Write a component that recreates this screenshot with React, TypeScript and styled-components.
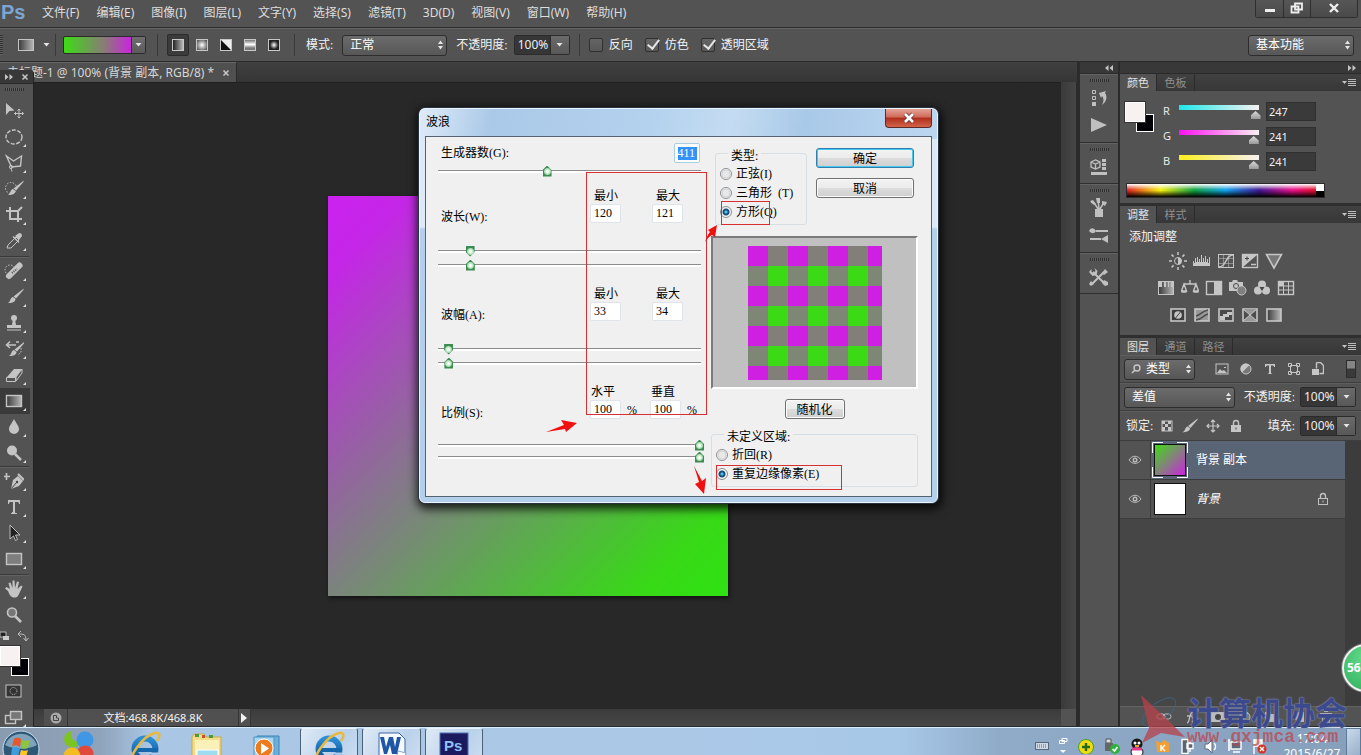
import React from "react";
import styled, { createGlobalStyle, css } from "styled-components";

const ui = `"Noto Sans", "Noto Sans CJK SC", sans-serif`;
const song = `"Liberation Serif", "Noto Sans CJK SC", serif`;

const Global = createGlobalStyle`
  * { box-sizing: border-box; }
  body { margin: 0; overflow: hidden; background: #282828; }
  button, input, select { font: inherit; color: inherit; margin: 0; }
  svg { display: block; flex: none; }
`;

/* ---------- shell ---------- */
const Screen = styled.div`
  position: relative;
  height: 100vh;
  display: flex;
  flex-direction: column;
  overflow: hidden;
  font: 12px/16px ${ui};
  color: #e8e8e8;
`;
const MenuBar = styled.header`
  display: flex;
  align-items: flex-start;
  height: 28px;
  flex: none;
  background: #535353;
  border-bottom: 1px solid #2c2c2c;
`;
const Brand = styled.span`
  width: 42px;
  padding-left: 1px;
  font: bold 20px/25px "Liberation Sans", sans-serif;
  color: #7ca6d2;
`;
const Menus = styled.nav`
  display: flex;
  gap: 17px;
  flex: 1;
  padding-top: 5px;
  color: #dedede;
`;
const MenuLink = styled.a`
  color: inherit;
  text-decoration: none;
  white-space: nowrap;
`;
const WindowButtons = styled.div`
  display: flex;
  margin-right: 3px;
  border: 1px solid #2e2e2e;
  border-top: 0;
  border-radius: 0 0 3px 3px;
`;
const WindowButton = styled.button<{ $w: number }>`
  width: ${(p) => p.$w}px;
  height: 17px;
  padding: 0 0 2px;
  display: grid;
  place-items: center;
  border: 0;
  border-right: 1px solid #2e2e2e;
  background: linear-gradient(#565656, #4a4a4a);
  &:last-child { border-right: 0; }
`;

/* ---------- option bar ---------- */
const OptionBar = styled.div`
  display: flex;
  align-items: center;
  flex: none;
  height: 34px;
  background: #535353;
  border-top: 1px solid #656565;
  border-bottom: 1px solid #2b2b2b;
  white-space: nowrap;
`;
const Grip = styled.span`
  width: 3px;
  height: 20px;
  margin-right: 14px;
  background: repeating-linear-gradient(#333 0 1px, #5e5e5e 1px 2px);
`;
const Divider = styled.span`
  width: 1px;
  height: 22px;
  background: #3a3a3a;
`;
const bareButton = css`
  padding: 0;
  border: 0;
  background: none;
  display: grid;
  place-items: center;
`;
const PresetButton = styled.button`
  ${bareButton}
  display: flex;
  align-items: center;
  gap: 8px;
  margin-right: 5px;
`;
const GradientPicker = styled.button`
  display: flex;
  width: 83px;
  height: 18px;
  margin: 0 11px 0 7px;
  padding: 0;
  border: 1px solid #2b2b2b;
  border-radius: 2px;
  background: linear-gradient(90deg, #3ddc14, #8a7a78 50%, #cc22e0 84%);
`;
const DropEnd = styled.span`
  width: 14px;
  height: 100%;
  margin-left: auto;
  display: grid;
  place-items: center;
  border-left: 1px solid #2b2b2b;
  background: linear-gradient(#6e6e6e, #5a5a5a);
`;
const GradientTypes = styled.div`
  display: flex;
  gap: 2px;
  margin: 0 9px 0 9px;
`;
const TypeButton = styled.button<{ $on?: boolean }>`
  ${bareButton}
  width: 22px;
  height: 22px;
  border: 1px solid ${(p) => (p.$on ? "#2c2c2c" : "transparent")};
  border-radius: 2px;
  background: ${(p) => (p.$on ? "#3b3b3b" : "none")};
`;
const TypeSwatch = styled.span<{ $fill: string }>`
  width: 12px;
  height: 12px;
  border: 1px solid #c8c8c8;
  background: ${(p) => p.$fill};
`;
const FieldLabel = styled.label`
  font-family: ${song};
  color: #f2f2f2;
`;
const SelectShell = styled.span<{ $w: number }>`
  display: grid;
  width: ${(p) => p.$w}px;
  height: 21px;
  align-items: center;
  > * { grid-area: 1 / 1; }
  > svg { justify-self: end; margin-right: 3px; pointer-events: none; }
  > svg + svg { justify-self: start; margin-left: 7px; }
`;
const SelectBox = styled.select<{ $pad: number }>`
  appearance: none;
  width: 100%;
  height: 21px;
  padding: 0 0 0 ${(p) => p.$pad}px;
  border: 1px solid #2d2d2d;
  border-radius: 3px;
  background: linear-gradient(#6b6b6b, #575757);
  font: 12px/16px ${song};
  color: #fff;
`;
const Combo = styled.span`
  display: flex;
  width: 56px;
  height: 20px;
  border: 1px solid #2b2b2b;
  border-radius: 2px;
`;
const ComboInput = styled.input`
  width: 35px;
  padding: 0 0 0 3px;
  border: 0;
  background: #363636;
  color: #f0f0f0;
`;
const ComboButton = styled.button`
  ${bareButton}
  flex: 1;
  border-left: 1px solid #2b2b2b;
  background: linear-gradient(#6a6a6a, #585858);
`;
const Tick = styled.label`
  display: flex;
  align-items: center;
  gap: 6px;
  font-family: ${song};
  color: #f2f2f2;
`;
const TickBox = styled.input`
  appearance: none;
  position: relative;
  width: 14px;
  height: 14px;
  border: 1px solid #303030;
  border-radius: 2px;
  background: linear-gradient(#646464, #585858);
  &:checked::after {
    content: "";
    position: absolute;
    left: 4px;
    top: -2px;
    width: 5px;
    height: 10px;
    border: solid #e6e6e6;
    border-width: 0 2px 2px 0;
    transform: rotate(38deg);
  }
`;
const OptionSet = styled.div<{ $gap: number; $left: number; $right: number }>`
  display: flex;
  align-items: center;
  gap: ${(p) => p.$gap}px;
  padding: 0 ${(p) => p.$right}px 0 ${(p) => p.$left}px;
`;
const Spring = styled.span`
  flex: 1;
`;

/* ---------- work area ---------- */
const Work = styled.main`
  display: flex;
  flex: 1;
  min-height: 0;
  border-bottom: 1px solid #2b2b2b;
`;
const DocColumn = styled.section`
  display: flex;
  flex-direction: column;
  flex: 1;
  min-width: 0;
`;
const TabStrip = styled.div`
  display: flex;
  height: 20px;
  flex: none;
  background: linear-gradient(#404040, #353535);
`;
const DocTab = styled.div`
  display: flex;
  align-items: center;
  gap: 8px;
  padding: 0 6px 0 7px;
  background: #505050;
  border-top: 1px solid #666;
  border-right: 1px solid #2b2b2b;
  color: #d6d6d6;
  white-space: nowrap;
`;
const TabClose = styled.button`
  ${bareButton}
  width: 8px;
`;
const Stage = styled.div`
  display: flex;
  flex: 1;
  min-height: 0;
`;
const Pasteboard = styled.div`
  flex: 1;
  display: grid;
  place-items: center;
  padding-right: 5px;
  background: #282828;
  border-top: 1px solid #202020;
`;
const Artwork = styled.div`
  width: 400px;
  height: 400px;
  background: linear-gradient(135deg, #cc22f0 0%, #c426e6 10%, #7f7f82 48%, #38d818 88%, #2fe212 100%);
  box-shadow: 1px 2px 4px #111;
`;
const ScrollV = styled.div`
  width: 16px;
  background: linear-gradient(90deg, #3a3a3a, #464646);
  border-right: 1px solid #2b2b2b;
`;
const StatusBar = styled.footer`
  display: flex;
  flex: none;
  height: 17px;
  padding-left: 44px;
  background: linear-gradient(#3b3b3b, #474747);
`;
const StatusCell = styled.div<{ $w: number }>`
  width: ${(p) => p.$w}px;
  display: grid;
  place-items: center;
  background: #505050;
  border-right: 1px solid #363636;
  font-size: 11px;
  line-height: 16px;
  color: #f4f4f4;
`;
const ScrollCorner = styled.span`
  width: 16px;
  margin-left: auto;
  background: #535353;
  border-right: 1px solid #2b2b2b;
`;

/* ---------- tool palette ---------- */
const Palette = styled.aside`
  position: absolute;
  left: 0;
  top: 70px;
  bottom: 28px;
  width: 34px;
  overflow: hidden;
  background: #535353;
  border-right: 1px solid #232323;
  border-radius: 0 4px 0 0;
`;
const PaletteHead = styled.div`
  display: flex;
  align-items: center;
  gap: 8px;
  height: 14px;
  padding-left: 5px;
  background: #383838;
  border-bottom: 1px solid #2a2a2a;
`;
const Dots = styled.div`
  width: 19px;
  height: 3px;
  background: repeating-linear-gradient(90deg, #2e2e2e 0 1px, #5e5e5e 1px 2px);
`;
const PaletteGrip = styled.div`
  height: 14px;
  padding: 4px 0 0 5px;
`;
const ToolButton = styled.button<{ $on?: boolean; $more?: boolean }>`
  ${bareButton}
  position: relative;
  width: 30px;
  height: 26px;
  justify-items: start;
  padding-left: 4px;
  color: #c4c4c4;
  background: ${(p) => (p.$on ? "#3a3a3a" : "none")};
  ${(p) =>
    p.$more &&
    css`
      &::after {
        content: "";
        position: absolute;
        right: 4px;
        bottom: 3px;
        border: solid transparent;
        border-width: 3px 0 0 3px;
        border-color: transparent;
        border-bottom: 3px solid #e0e0e0;
      }
    `}
`;
const ToolRule = styled.div<{ $h: number }>`
  width: 29px;
  height: ${(p) => p.$h}px;
  border-bottom: 1px solid #626262;
  box-shadow: inset 0 -1px #3a3a3a;
`;
const SwapRow = styled.div`
  display: flex;
  align-items: center;
  gap: 7px;
  height: 16px;
`;
const ToolSwatches = styled.div`
  height: 34px;
  padding-top: 2px;
`;

/* ---------- icon dock ---------- */
const Dock = styled.aside`
  width: 42px;
  flex: none;
  display: flex;
  flex-direction: column;
  border: solid #2b2b2b;
  border-width: 0 1px 0 3px;
  background: #535353;
`;
const DockHead = styled.div<{ $pad: number }>`
  display: flex;
  align-items: center;
  justify-content: flex-end;
  height: 12px;
  flex: none;
  padding-right: ${(p) => p.$pad}px;
  background: #383838;
  border-bottom: 1px solid #2b2b2b;
`;
const DockGroup = styled.div<{ $h: number }>`
  height: ${(p) => p.$h}px;
  display: flex;
  flex-direction: column;
  align-items: center;
  gap: 5px;
  padding-top: 4px;
  border-top: 1px solid #636363;
  border-bottom: 1px solid #2e2e2e;
  color: #c0c0c0;
`;
const DockButton = styled.button`
  ${bareButton}
  width: 24px;
  height: 22px;
`;

/* ---------- panels ---------- */
const Panels = styled.aside`
  width: 242px;
  flex: none;
  display: flex;
  flex-direction: column;
  background: #2f2f2f;
  border-left: 1px solid #2b2b2b;
`;
const Panel = styled.section<{ $h?: number }>`
  display: flex;
  flex-direction: column;
  ${(p) => (p.$h ? `height: ${p.$h}px; flex: none;` : "flex: 1; min-height: 0;")}
  margin-bottom: ${(p) => (p.$h ? 3 : 0)}px;
  background: #535353;
`;
const PanelTabs = styled.div`
  display: flex;
  align-items: center;
  height: 17px;
  flex: none;
  padding-right: 5px;
  background: linear-gradient(#414141, #373737);
`;
const PanelTab = styled.button<{ $on?: boolean }>`
  height: 17px;
  width: ${(p) => (p.$on ? 37 : 38)}px;
  padding: 0 0 1px;
  border: 0;
  border-right: 1px solid #2b2b2b;
  background: ${(p) => (p.$on ? "#535353" : "none")};
  color: ${(p) => (p.$on ? "#e2e2e2" : "#8f8f8f")};
  font-size: 11px;
  line-height: 15px;
`;
const PanelMenu = styled.button`
  ${bareButton}
  margin-left: auto;
`;
const ColorBody = styled.div`
  display: grid;
  grid-template-columns: 38px 1fr;
  padding: 11px 44px 0 5px;
`;
const SwatchPair = styled.div`
  position: relative;
  width: 29px;
  height: 30px;
`;
const BackSwatch = styled.span`
  position: absolute;
  left: 11px;
  top: 12px;
  width: 18px;
  height: 18px;
  background: #020206;
  border: 1px solid #fff;
`;
const FrontSwatch = styled.span`
  position: absolute;
  left: 0;
  top: 0;
  width: 20px;
  height: 20px;
  background: #f7f1f1;
  border: 1px solid #fff;
  box-shadow: 0 0 0 1px #333;
`;
const Channels = styled.div`
  display: flex;
  flex-direction: column;
  gap: 6px;
`;
const Channel = styled.label`
  display: flex;
  align-items: flex-start;
  height: 19px;
  line-height: 17px;
  font-size: 11px;
  > span { width: 12px; }
`;
const ChannelSlider = styled.input<{ $from: string }>`
  appearance: none;
  width: 88px;
  height: 18px;
  background: linear-gradient(90deg, ${(p) => p.$from}, #f7f1f1) 4px 3px / 80px 5px no-repeat;
  &::-webkit-slider-thumb {
    appearance: none;
    width: 10px;
    height: 8px;
    margin-top: 8px;
    background: linear-gradient(#dcdcdc, #999);
    clip-path: polygon(50% 0, 100% 55%, 100% 100%, 0 100%, 0 55%);
  }
`;
const ChannelInput = styled.input`
  width: 50px;
  height: 19px;
  margin-left: 3px;
  padding: 0 0 0 2px;
  background: #3a3a3a;
  border: 1px solid #303030;
  color: #f0f0f0;
  font-size: 11px;
`;
const Spectrum = styled.div`
  display: flex;
  justify-content: flex-end;
  width: 199px;
  height: 15px;
  margin: 12px 0 0 6px;
  border: 1px solid #2b2b2b;
  background:
    linear-gradient(#fff, #fff0 45%, #0000 50%, #000),
    linear-gradient(90deg, #e02020, #f6ee10 17%, #10a040 34%, #10a0e8 50%, #401890 67%, #e81088 84%, #e01020 97%);
`;
const SpectrumEnd = styled.span`
  width: 8px;
  background: linear-gradient(#fff 50%, #000 50%);
`;
const AdjustBody = styled.div`
  padding: 6px 39px 0 9px;
  font-family: ${song};
  color: #f4f4f4;
`;
const AdjustRow = styled.div`
  display: flex;
  justify-content: center;
  gap: 6px;
  height: 18px;
  margin: 9px 0;
  color: #c6c6c6;
  &:first-of-type { margin-top: 7px; }
`;
const AdjustButton = styled.button`
  ${bareButton}
  width: 18px;
  height: 18px;
`;
const LayerRow = styled.div<{ $h: number }>`
  display: flex;
  align-items: center;
  height: ${(p) => p.$h}px;
  flex: none;
  padding: 0 5px 0 4px;
  border-bottom: 1px solid #3e3e3e;
  border-top: 1px solid #5e5e5e;
  color: #c6c6c6;
`;
const FilterIcons = styled.div`
  display: flex;
  gap: 6px;
  margin: 0 auto 0 18px;
`;
const FilterSwitch = styled.button`
  width: 10px;
  height: 18px;
  padding: 0;
  border: 1px solid #2d2d2d;
  background: linear-gradient(#858585 0 7px, #3a3a3a 8px);
`;
const LayerList = styled.div`
  flex: 1;
  min-height: 0;
  padding-right: 16px;
  background: linear-gradient(90deg, #464646 225px, #3c3c3c 225px);
`;
const Layer = styled.div<{ $on?: boolean }>`
  display: flex;
  align-items: center;
  height: 39px;
  border-bottom: 1px solid #3b3b3b;
  background: ${(p) => (p.$on ? "#596575" : "#535353")};
  font-family: ${song};
  font-style: ${(p) => (p.$on ? "normal" : "italic")};
  color: #fff;
`;
const EyeCell = styled.button`
  ${bareButton}
  width: 31px;
  height: 100%;
  background: #535353;
  border-right: 1px solid #3b3b3b;
`;
const ThumbFrame = styled.span`
  display: grid;
  width: 36px;
  height: 36px;
  margin: 0 8px 0 1px;
  place-items: center;
  > * { grid-area: 1 / 1; }
`;
const Thumb = styled.span<{ $fill: string }>`
  width: 32px;
  height: 32px;
  border: 1px solid #111;
  background: ${(p) => p.$fill};
`;
const LockSlot = styled.span`
  margin: 0 16px 0 auto;
  color: #c0c0c0;
`;
const LayerFooter = styled.div`
  display: flex;
  align-items: center;
  justify-content: center;
  gap: 9px;
  height: 20px;
  flex: none;
  padding-left: 8px;
  border-top: 1px solid #626262;
  color: #bdbdbd;
`;

/* ---------- dialog ---------- */
const Dialog = styled.section`
  position: absolute;
  left: 419px;
  top: 108px;
  width: 519px;
  height: 395px;
  padding: 0 5px 5px;
  border: 1px solid #eaf4fd;
  border-radius: 6px;
  background:
    linear-gradient(100deg, #dfebf8 0, #aac9e8 14%, #b4d2ee 45%, #c4dcf2 60%, #a9c9e8 74%, #bcd6f0 100%) 0 0 / 100% 30px no-repeat,
    linear-gradient(#dde9f6 0 118px, #b4cfeb 120px);
  box-shadow: 0 0 0 1px #2a3340, 1px 3px 10px 3px #000c;
  color: #000;
  font: 12px/16px ${song};
`;
const DialogTitle = styled.header`
  display: flex;
  justify-content: space-between;
  height: 27px;
  padding-left: 1px;
  line-height: 26px;
`;
const DialogClose = styled.button`
  ${bareButton}
  width: 47px;
  height: 19px;
  border: 1px solid #5e2a26;
  border-top: 0;
  border-radius: 0 0 4px 4px;
  background: linear-gradient(#e4a396, #cf6a58 45%, #b02d1b 50%, #d2654c);
`;
const DialogBody = styled.form`
  display: flex;
  gap: 9px;
  height: 361px;
  padding: 0 13px 0 12px;
  border: 1px solid #56626e;
  background: #f0f0f0;
`;
const LeftSide = styled.div`
  width: 264px;
  padding-top: 6px;
`;
const RightSide = styled.div`
  flex: 1;
  min-width: 0;
  padding-top: 9px;
`;
const WaveHead = styled.div`
  display: flex;
  align-items: center;
  justify-content: space-between;
  height: 20px;
  padding: 0 2px 0 3px;
`;
const WaveGroup = styled.div<{ $tight?: boolean }>`
  margin-bottom: ${(p) => (p.$tight ? 0 : 14)}px;
`;
const FirstGroup = styled.div`
  margin-bottom: 9px;
`;
const GroupHead = styled.div<{ $tight?: boolean }>`
  display: grid;
  grid-template-columns: 149px ${(p) => (p.$tight ? 60 : 62)}px 50px;
  height: 36px;
  padding-left: 3px;
  margin-bottom: ${(p) => (p.$tight ? 19 : 20)}px;
`;
const GroupName = styled.span`
  align-self: end;
  line-height: 14px;
`;
const PairField = styled.label`
  display: block;
`;
const PairName = styled.span<{ $tight?: boolean }>`
  padding-left: ${(p) => (p.$tight ? 1 : 4)}px;
`;
const PairInputRow = styled.span`
  display: flex;
  align-items: center;
  gap: 6px;
`;
const NumberInput = styled.input<{ $w: number }>`
  width: ${(p) => p.$w}px;
  height: 19px;
  padding: 0 0 1px 3px;
  border: 1px solid #dfe3ea;
  border-radius: 2px;
  background: #fff;
`;
const ActiveInput = styled.div`
  display: grid;
  place-items: center;
  width: 26px;
  height: 20px;
  border: 1px solid #a9cfe4;
  border-radius: 2px;
  background: #fff;
  > input {
    width: 19px;
    height: 13px;
    padding: 0;
    border: 0;
    background: #3391f7;
    color: #fff;
  }
`;
const Slider = styled.input<{ $h: number; $down?: boolean }>`
  appearance: none;
  display: block;
  width: 268px;
  height: ${(p) => p.$h}px;
  margin-left: -2px;
  background: linear-gradient(#8c8c8c 1px, #fff 1px) 2px center / 263px 3px no-repeat;
  &::-webkit-slider-thumb {
    appearance: none;
    width: 9px;
    height: 11px;
    background: radial-gradient(circle at 50% 50%, #f2fff4 0 1px, #a6dcae 3px, #3d8b52 4px);
    clip-path: ${(p) =>
      p.$down
        ? "polygon(0 0, 100% 0, 100% 60%, 50% 100%, 0 60%)"
        : "polygon(50% 0, 100% 40%, 100% 100%, 0 100%, 0 40%)"};
  }
`;
const TopRight = styled.div`
  display: flex;
  gap: 9px;
  padding: 0 4px;
  margin-bottom: 11px;
`;
const Choices = styled.fieldset<{ $w?: number }>`
  ${(p) => p.$w && `width: ${p.$w}px;`}
  min-width: 0;
  margin: 0;
  padding: 4px 0 3px 4px;
  border: 1px solid #d5dfe5;
  border-radius: 3px;
`;
const Caption = styled.legend`
  margin-left: 8px;
  padding: 6px 3px 0;
  line-height: 8px;
`;
const Choice = styled.label`
  display: flex;
  align-items: center;
  gap: 4px;
  height: 19px;
  white-space: pre;
`;
const RadioDot = styled.input`
  appearance: none;
  width: 12px;
  height: 12px;
  border: 1px solid #8a8f94;
  border-radius: 50%;
  background: radial-gradient(circle, #e8e8e8 0 3px, #cfcfcf 4px, #fff 5px);
  &:checked {
    background: radial-gradient(circle, #58c0e8 0 1px, #14507e 2px 3px, #f4f4f4 4px);
  }
`;
const Actions = styled.div`
  display: flex;
  flex-direction: column;
  gap: 10px;
  flex: 1;
  padding-top: 2px;
`;
const DialogButton = styled.button<{ $default?: boolean; $w?: number }>`
  display: block;
  width: ${(p) => (p.$w ? `${p.$w}px` : "100%")};
  height: 20px;
  padding: 2px 0 0;
  line-height: 16px;
  border: 1px solid ${(p) => (p.$default ? "#2f7fae" : "#707070")};
  border-radius: 3px;
  box-shadow: inset 0 0 0 1px ${(p) => (p.$default ? "#46c8f0" : "#fcfcfc")};
  background: linear-gradient(#f3f3f3, #ebebeb 48%, #dcdcdc 52%, #cfcfcf);
`;
const Preview = styled.div`
  display: grid;
  place-items: center;
  height: 153px;
  margin-bottom: 10px;
  border: 2px solid #7b7b7b;
  border-right-color: #fff;
  border-bottom-color: #fff;
  background: #c0c0c0;
`;
const RandomRow = styled.div`
  display: flex;
  justify-content: center;
  margin-bottom: 8px;
`;
const Marks = styled.svg`
  position: absolute;
  left: -1px;
  top: -1px;
  pointer-events: none;
`;

/* ---------- task bar ---------- */
const TaskBar = styled.footer`
  display: flex;
  gap: 1px;
  height: 28px;
  flex: none;
  overflow: hidden;
  border-top: 1px solid #dcebf8;
  background: linear-gradient(90deg, #8a9bb0 0, #8fa3bb 100px, #a9c6e4 150px, #abc8e7 700px, #a8c8e8 900px, #8fabc8 1000px, #86a0bc);
`;
const StartButton = styled.button`
  ${bareButton}
  width: 47px;
  height: 40px;
  padding-right: 5px;
`;
const TaskItem = styled.button<{ $w: number; $open?: boolean }>`
  ${bareButton}
  width: ${(p) => p.$w}px;
  height: 40px;
  place-items: start center;
  padding-top: 3px;
  ${(p) =>
    p.$open &&
    css`
      margin-right: 3px;
      border: 1px solid #4b6178;
      border-top-color: #e8f2fb;
      border-radius: 3px;
      background: linear-gradient(120deg, #dfeaf6, #b9d1ea 60%, #cfe0f2);
      padding-top: 2px;
    `}
`;
const Tray = styled.div`
  display: flex;
  align-items: flex-start;
  gap: 10px;
  margin-left: auto;
  padding: 10px 11px 0 0;
`;
const Clock = styled.time`
  display: block;
  width: 66px;
  padding-top: 3px;
  text-align: center;
  line-height: 15px;
  color: #fff;
`;
const ShowDesktop = styled.button`
  width: 15px;
  height: 40px;
  border: 1px solid #5f7a96;
  background: linear-gradient(135deg, #c9d9ea, #8aa4bf);
`;

/* ---------- overlays ---------- */
const Bubble = styled.div`
  position: absolute;
  right: -29px;
  top: 644px;
  width: 48px;
  height: 48px;
  padding-left: 3px;
  border: 2px solid #f2f2f2;
  border-radius: 50%;
  box-shadow: 0 0 0 1px #777;
  background: radial-gradient(circle at 50% 30%, #66dc8c, #2fae5c);
  font: bold 12px/44px ${ui};
  color: #fff;
`;
const Watermark = styled.div`
  position: absolute;
  right: 14px;
  top: 692px;
  display: flex;
  pointer-events: none;
`;
const MarkName = styled.div`
  font: bold 32px/38px "Noto Sans CJK SC", sans-serif;
  color: #2e3d86d9;
  text-shadow: 0 0 1px #8c93b8, 0 0 2px #8c93b8;
`;
const MarkSite = styled.div`
  font: bold 18px/14px "Liberation Mono", monospace;
  color: #c0404ab0;
`;

/* ---------- small drawings ---------- */
const Svg = ({ w, h = w, box, children }: { w: number; h?: number; box?: string; children: React.ReactNode }) => (
  <svg width={w} height={h} viewBox={box ?? `0 0 ${w} ${h}`} fill="none" stroke="currentColor" aria-hidden="true">
    {children}
  </svg>
);
const Caret = () => (
  <Svg w={7} h={4}><path d="M0.5 0h6L3.5 3.5Z" fill="#e6e6e6" stroke="none" /></Svg>
);
const UpDown = () => (
  <Svg w={7} h={10}><path d="M1 4h5L3.500 0.500ZM1 6h5L3.500 9.500Z" fill="#e6e6e6" stroke="none" /></Svg>
);
const Cross = () => (
  <Svg w={8}><path d="M1.500 1.500l5 5M6.500 1.500l-5 5" stroke="#c8c8c8" strokeWidth="1.500" /></Svg>
);
const Chevrons = ({ left }: { left?: boolean }) => (
  <Svg w={8} h={6}>
    <path d={left ? "M3.500 0v6L0 3ZM8 0v6L4.500 3Z" : "M0 0v6L3.500 3ZM4.500 0v6L8 3Z"} fill="#c4c4c4" stroke="none" />
  </Svg>
);
const MenuLines = () => (
  <Svg w={14} h={9}>
    <path d="M0 3h5L2.500 6Z" fill="#c4c4c4" stroke="none" />
    <path d="M6 1.500h8M6 3.500h8M6 5.500h8M6 7.500h8" stroke="#bbb" />
  </Svg>
);

const F = { fill: "currentColor", stroke: "none" };
const brush = <path d="M18.500 2.500L20 1.500l-1 2-7 8-2.500-2ZM9 10l2.500 2c0 3-4 4.500-8 4 2-.6 2.500-2 3-3.500S8 10 9 10Z" {...F} />;
const tools: { name: string; art: React.ReactNode; more?: boolean; on?: boolean; rule?: number }[] = [
  { name: "移动", art: <><path d="M2 2v12l3.500-4 5-.5Z" {...F} /><path d="M15 8v9M10.500 12.500h9M13.500 9.500L15 8l1.500 1.500M13.500 15.500L15 17l1.500-1.500M12 11l-1.500 1.500L12 14M18 11l1.500 1.500L18 14" /></> },
  { name: "椭圆选框", more: true, art: <ellipse cx="10" cy="10" rx="8" ry="7" strokeWidth="1.400" strokeDasharray="4 1.500" /> },
  { name: "多边形套索", more: true, art: <><path d="M2.500 3l7 5 8-5-1 10-9 1Z" strokeWidth="1.400" /><circle cx="7" cy="14" r="1.600" /><path d="M7 15.500l1 3" /></> },
  { name: "快速选择", more: true, art: <><circle cx="7" cy="9" r="5.500" strokeDasharray="1.500 1.500" />{brush}</> },
  { name: "裁剪", more: true, art: <path d="M6 2v12h12M2 6h12v11M14 6l4-4" strokeWidth="2" /> },
  { name: "吸管", more: true, rule: 4, art: <><path d="M3 17l1-3 8-8 3 3-8 8Z" /><path d="M11 5l4-3c2 0 3 1 3 3l-3 4ZM9.500 5l6 6-1 1-6-6Z" {...F} /></> },
  { name: "修复画笔", more: true, art: <><circle cx="6" cy="9" r="5" strokeDasharray="1.500 1.500" /><path d="M5 15L15.500 4.500" strokeWidth="6" strokeLinecap="round" /><path d="M8 12l5-4" stroke="#555" strokeWidth="2" strokeDasharray="1 1" /></> },
  { name: "画笔", more: true, art: brush },
  { name: "仿制图章", more: true, art: <><circle cx="10" cy="5" r="3" {...F} /><path d="M9 6h2l1 6h5v3H3v-3h5ZM3 16.500h14v1H3Z" {...F} /></> },
  { name: "历史记录画笔", more: true, art: <><g transform="translate(1 1)">{brush}</g><path d="M3 6h9M6 2.500L2.500 6 6 9M12 3h3" strokeWidth="1.500" /><path d="M17 9c1 4-1 6-4 7" strokeDasharray="1.500 1.500" /></> },
  { name: "橡皮擦", more: true, art: <><path d="M3 12l7-8h8l-6 8Z" {...F} /><path d="M2.500 12.500h9v4h-9ZM12 12l6-8v4l-6 8Z" /></> },
  { name: "渐变", more: true, on: true, art: <rect x="2.500" y="4.500" width="15" height="11" fill="url(#fade)" strokeWidth="1.400" /> },
  { name: "模糊", more: true, art: <path d="M10 2c2 4 5 7 5 10a5 5 0 0 1-10 0c0-3 3-6 5-10Z" {...F} /> },
  { name: "减淡", more: true, rule: 2, art: <><circle cx="8" cy="7.500" r="5" {...F} /><path d="M11 11l6 6" strokeWidth="2.500" /></> },
  { name: "钢笔", more: true, art: <><path d="M7 18l2-9 5-4 5 5-4 5Z" {...F} /><path d="M14 3l6 6" strokeWidth="2" /><path d="M7.500 17.500l5-6" stroke="#444" /><circle cx="13" cy="11" r="1.200" fill="#444" stroke="none" /><path d="M-1 5.500h7M2.500 2v7" strokeWidth="1.600" /></> },
  { name: "文字", more: true, art: <path d="M4 3h12v4h-1c0-1.500-.5-2-2-2h-2v10c0 1 .5 1 2 1.200v.8H7v-.8c1.500-.2 2-.2 2-1.200V5H7c-1.500 0-2 .5-2 2H4Z" {...F} /> },
  { name: "路径选择", more: true, art: <path d="M6 2v14l3.500-3 2 4.500 2-1-2-4.500H16Z" fill="#222" stroke="#bbb" /> },
  { name: "矩形", more: true, rule: 4, art: <rect x="2.500" y="4.500" width="15" height="11" fill="#7e7e7e" strokeWidth="1.400" /> },
  { name: "抓手", more: true, art: <path d="M4 12L1 9.500 2.500 8 6 10 4.500 4 6.500 3.500 8.500 9l0-7.500h2L11 9l2-6.500 2 .5-1.500 7L17 6.500l1.500 1L15 15c-1 2-1.500 3.500-4.500 3.500S6 17 4 12Z" {...F} /> },
  { name: "缩放", art: <><circle cx="8" cy="7.500" r="4.500" fill="#777" strokeWidth="1.600" /><path d="M11 11l6 6" strokeWidth="2.600" /></> },
];

const adjustRows: React.ReactNode[][] = [
  [
    <><circle cx="9" cy="9" r="3.500" /><path d="M9 5.500a3.500 3.500 0 0 1 0 7Z" {...F} /><path d="M9 0v3M9 15v3M0 9h3M15 9h3M2.600 2.600l2 2M13.400 13.400l2 2M15.400 2.600l-2 2M4.600 13.400l-2 2" strokeWidth="1.500" /></>,
    <path d="M0 14V9h1v2h1V6h1v4h1V5h1v5h1V7h1v3h1V3h1v7h1V6h1v4h1V4h1v6h1V7h1v4h1V5h1v9Z" {...F} />,
    <><rect x="1.500" y="2.500" width="15" height="13" /><path d="M6.500 2v13M11.500 2v13M1 6.500h15M1 11.500h15" opacity=".5" /><path d="M2 15c8 0 6-12 14-12" strokeWidth="1.500" /></>,
    <><rect x="1.500" y="2.500" width="15" height="13" strokeWidth="1.400" /><path d="M2 3h14L2 15Z" {...F} /><path d="M4 6.500h4M6 4.500v4" stroke="#444" /><path d="M10 12.500h5" strokeWidth="1.500" /></>,
    <path d="M1.500 2.500h15L9 16Z" fill="#777" strokeWidth="1.600" />,
  ],
  [
    <><rect x="1.500" y="2.500" width="15" height="13" fill="url(#fade)" /><path d="M2 3h3v5H2ZM7 3h2v5H7ZM11 3h1v5h-1ZM14 3h2v5h-2Z" {...F} /></>,
    <path d="M9 1v4M3 5h12M3 5L.5 12h5ZM15 5l-2.500 7h5ZM.5 13h5M12.500 13h5" strokeWidth="1.400" />,
    <><rect x="1.500" y="2.500" width="15" height="13" strokeWidth="1.400" /><path d="M9 3h7v12H9Z" {...F} /></>,
    <><path d="M0 3h3l1-2h4l1 2h5v9H0Z" {...F} /><circle cx="7" cy="7" r="2.500" stroke="#444" /><circle cx="12.500" cy="11.500" r="4.500" fill="#808080" /></>,
    <><circle cx="9" cy="5.500" r="4" {...F} /><circle cx="5" cy="11.500" r="4" {...F} /><circle cx="13" cy="11.500" r="4" {...F} /><path d="M6.500 8h5L9 12Z" fill="#444" stroke="none" /></>,
    <><rect x="1.500" y="2.500" width="15" height="13" strokeWidth="1.400" /><path d="M6.500 2v13M11.500 2v13M1 7h15M1 11h15" /><path d="M2 3h4v4H2Z" {...F} /></>,
  ],
  [
    <><rect x="2" y="3" width="14" height="12" fill="#3d3d3d" strokeWidth="1.600" /><circle cx="9" cy="9" r="3.800" {...F} /><path d="M5 14l8-10" stroke="#444" /></>,
    <><rect x="2" y="3" width="14" height="12" fill="#999" strokeWidth="1.600" /><path d="M3 10c5-1 6-5 12-6M3 14c6 0 7-5 12-6" stroke="#4d4d4d" strokeWidth="1.600" /></>,
    <><rect x="2" y="3" width="14" height="12" fill="#4a4a4a" strokeWidth="1.600" /><path d="M3 10h3V8h4V6h5v3h-3v2H8v3H3Z" {...F} /></>,
    <><rect x="2" y="3" width="14" height="12" fill="#4d4d4d" strokeWidth="1.600" /><path d="M2 3h14L9 9ZM2 15h14L9 9Z" fill="#999" stroke="none" /><path d="M2 3l7 6 7-6M2 15l7-6 7 6" /></>,
    <rect x="2" y="3" width="14" height="12" fill="url(#fade)" strokeWidth="1.600" />,
  ],
];
const adjustNames = [
  ["亮度/对比度", "色阶", "曲线", "曝光度", "自然饱和度"],
  ["色相/饱和度", "色彩平衡", "黑白", "照片滤镜", "通道混合器", "颜色查找"],
  ["反相", "色调分离", "阈值", "可选颜色", "渐变映射"],
];

const Lock = ({ solid }: { solid?: boolean }) => (
  <Svg w={12} h={14}>
    <rect x="1.500" y="6.500" width="9" height="6" fill={solid ? "currentColor" : "none"} />
    <path d="M3.500 6V4a2.500 2.500 0 0 1 5 0v2" strokeWidth="1.400" />
    <path d="M6 8.500v2" stroke={solid ? "#444" : "currentColor"} />
  </Svg>
);
const Eye = () => (
  <Svg w={14} h={10}>
    <path d="M1 5c3-5 9-5 12 0-3 4.500-9 4.500-12 0Z" stroke="#bdbdbd" />
    <circle cx="7" cy="5" r="2.500" fill="#bdbdbd" stroke="none" />
    <circle cx="7" cy="5" r="1" fill="#444" stroke="none" />
  </Svg>
);

const IeIcon = () => (
  <Svg w={34} h={34}>
    <circle cx="17" cy="18" r="10.500" stroke="url(#ie)" strokeWidth="6" />
    <path d="M9 19h21" stroke="#1467aa" strokeWidth="4" />
    <path d="M20 21.500h11l-3 6Z" fill="#abc8e7" stroke="none" />
    <path d="M4 33C-1 28 14 5 27 2c6-1 5 4 2 8" stroke="#e9b93c" strokeWidth="2.500" />
  </Svg>
);

const Percentage = ({ id }: { id: string }) => (
  <Combo>
    <ComboInput id={id} defaultValue="100%" />
    <ComboButton aria-label="调整数值"><Caret /></ComboButton>
  </Combo>
);

const Tabs = ({ names }: { names: string[] }) => (
  <PanelTabs>
    {names.map((n, i) => <PanelTab key={n} $on={i === 0}>{n}</PanelTab>)}
    <PanelMenu aria-label="面板菜单"><MenuLines /></PanelMenu>
  </PanelTabs>
);

type WaveProps = { name: string; heads: [string, string]; values: [number, number]; max: number; tight?: boolean };
const Wave = ({ name, heads, values, max, tight }: WaveProps) => (
  <WaveGroup $tight={tight}>
    <GroupHead $tight={tight}>
      <GroupName>{name}</GroupName>
      {heads.map((h, i) => (
        <PairField key={h}>
          <PairName $tight={tight}>{h}</PairName>
          <PairInputRow>
            <NumberInput $w={31} defaultValue={values[i]} />
            {tight && "%"}
          </PairInputRow>
        </PairField>
      ))}
    </GroupHead>
    {values.map((v, i) => (
      <Slider key={i} type="range" min={0} max={max} defaultValue={v} $h={tight ? 12 : 14} $down={!tight && i === 0} aria-label={`${name}${heads[i]}`} />
    ))}
  </WaveGroup>
);

const cells = Array.from({ length: 49 }, (_, i) => ({ c: i % 7, r: Math.floor(i / 7) }));
const cellColor = (c: number, r: number) =>
  r % 2 === 0 ? (c % 2 === 0 ? "#ce1fe2" : "#827f79") : c % 2 === 0 ? "#7e8676" : "#3adb14";

const menus = ["文件(F)", "编辑(E)", "图像(I)", "图层(L)", "文字(Y)", "选择(S)", "滤镜(T)", "3D(D)", "视图(V)", "窗口(W)", "帮助(H)"];
const fills: [string, string][] = [
  ["线性渐变", "linear-gradient(90deg, #222, #bbb)"],
  ["径向渐变", "radial-gradient(circle, #fff, #444)"],
  ["角度渐变", "linear-gradient(45deg, #111 45%, #eee 55%)"],
  ["对称渐变", "linear-gradient(#777, #fff 45%, #777 80%)"],
  ["菱形渐变", "radial-gradient(circle, #fff, #222 60%)"],
];

export default function App() {
  return (
    <Screen>
      <Global />
      <svg width="0" height="0" style={{ position: "absolute" }} aria-hidden="true">
        <linearGradient id="fade"><stop stopColor="#3a3a3a" /><stop offset="1" stopColor="#b8b8b8" /></linearGradient>
        <linearGradient id="ie" x2="0" y2="1"><stop stopColor="#2b8fd6" /><stop offset="1" stopColor="#0f4f94" /></linearGradient>
      </svg>

      <MenuBar>
        <Brand>Ps</Brand>
        <Menus>{menus.map((m) => <MenuLink key={m} href="#">{m}</MenuLink>)}</Menus>
        <WindowButtons>
          <WindowButton $w={28} aria-label="最小化"><Svg w={12} h={10}><path d="M1 7.500h10" stroke="#eee" strokeWidth="3" /></Svg></WindowButton>
          <WindowButton $w={27} aria-label="还原"><Svg w={14} h={12}><path d="M5 1.500h7v6H5ZM1.500 4.500h7v6h-7Z" stroke="#eee" strokeWidth="1.800" fill="#505050" /></Svg></WindowButton>
          <WindowButton $w={46} aria-label="关闭"><Svg w={12} h={10}><path d="M2 1l8 8M10 1L2 9" stroke="#eee" strokeWidth="2.400" /></Svg></WindowButton>
        </WindowButtons>
      </MenuBar>

      <OptionBar>
        <Grip />
        <PresetButton aria-label="工具预设">
          <Svg w={18} h={14}><rect x="1.500" y="1.500" width="15" height="11" fill="url(#fade)" stroke="#c4c4c4" /></Svg>
          <Caret />
        </PresetButton>
        <Divider />
        <GradientPicker aria-label="渐变编辑"><DropEnd><Caret /></DropEnd></GradientPicker>
        <Divider />
        <GradientTypes>
          {fills.map(([n, f], i) => <TypeButton key={n} aria-label={n} $on={i === 0}><TypeSwatch $fill={f} /></TypeButton>)}
        </GradientTypes>
        <Divider />
        <OptionSet $gap={9} $left={11} $right={9}>
          <FieldLabel htmlFor="mode">模式:</FieldLabel>
          <SelectShell $w={105}><SelectBox id="mode" $pad={7}><option>正常</option></SelectBox><UpDown /></SelectShell>
        </OptionSet>
        <OptionSet $gap={6} $left={0} $right={9}>
          <FieldLabel htmlFor="opacity">不透明度:</FieldLabel>
          <Percentage id="opacity" />
        </OptionSet>
        <Divider />
        <OptionSet $gap={12} $left={9} $right={0}>
          <Tick><TickBox type="checkbox" />反向</Tick>
          <Tick><TickBox type="checkbox" defaultChecked />仿色</Tick>
          <Tick><TickBox type="checkbox" defaultChecked />透明区域</Tick>
        </OptionSet>
        <Spring />
        <OptionSet $gap={0} $left={0} $right={7}>
          <SelectShell $w={106}><SelectBox aria-label="工作区" $pad={7}><option>基本功能</option></SelectBox><UpDown /></SelectShell>
        </OptionSet>
      </OptionBar>

      <Work>
        <DocColumn>
          <TabStrip>
            <DocTab>未标题-1 @ 100% (背景 副本, RGB/8) *<TabClose aria-label="关闭文档"><Cross /></TabClose></DocTab>
          </TabStrip>
          <Stage>
            <Pasteboard><Artwork /></Pasteboard>
            <ScrollV />
          </Stage>
          <StatusBar>
            <StatusCell $w={24}><Svg w={12}><circle cx="6" cy="6" r="5.500" fill="#aaa" stroke="none" /><path d="M3.500 3.500h3v2.500h2v2.500h-5Z" stroke="#444" /></Svg></StatusCell>
            <StatusCell $w={171}>文档:468.8K/468.8K</StatusCell>
            <StatusCell $w={12}><Svg w={7} h={10}><path d="M0 0v10l6-5Z" fill="#f0f0f0" stroke="none" /></Svg></StatusCell>
            <ScrollCorner />
          </StatusBar>
        </DocColumn>

        <Dock>
          <DockHead $pad={5}><Chevrons left /></DockHead>
          <DockGroup $h={69}>
            <Dots />
            <DockButton aria-label="历史记录"><Svg w={18}><path d="M2.500 1.500h3v3h-3ZM2.500 7.500h3v3h-3Z" /><path d="M2 13h4v4H2ZM9 4l7-2-1 2c3 4 1 9-3 12 2-4 2-7 0-9l-1 2Z" {...F} /></Svg></DockButton>
            <DockButton aria-label="动作"><Svg w={16} h={14}><path d="M0 0v14l16-7Z" {...F} /></Svg></DockButton>
          </DockGroup>
          <DockGroup $h={41}>
            <Dots />
            <DockButton aria-label="属性"><Svg w={18}><path d="M1 4l4.500-2L10 4v5l-4.500 2L1 9ZM1 4l4.500 2L10 4M5.500 6v5" strokeWidth="1.300" /><path d="M12 1h4v3h-4ZM12 5h4v3h-4ZM12 9h4v3h-4ZM1 14h16v3H1Z" {...F} /></Svg></DockButton>
          </DockGroup>
          <DockGroup $h={69}>
            <Dots />
            <DockButton aria-label="画笔预设"><Svg w={18} h={20}><path d="M5 11h8v8H5Z" {...F} /><path d="M1 4l4 2 3 5M8 1l1 10M16 5l-3 1-3 5" strokeWidth="1.500" /><path d="M0 3l3-1 3 4-2 1ZM6 0h4v5H7ZM12 3l5 1-2 4-3-2Z" {...F} /></Svg></DockButton>
            <DockButton aria-label="画笔"><Svg w={20} h={18}><path d="M7 4h12v2H7ZM0 5c2-4 5-3 7 0-2 3-4 3-7 0ZM1 12h11v2H1ZM12 13l7-4v8Z" {...F} /></Svg></DockButton>
          </DockGroup>
          <DockGroup $h={41}>
            <Dots />
            <DockButton aria-label="工具预设"><Svg w={20} h={18}><path d="M3 16L15 4M4 4l12 12" strokeWidth="2" /><path d="M0 4l2.500-3 0 3 2 1 2-2-1-3 3 3-1 4-4 1ZM16 1l3 3-4 3-2-2ZM2 13l3 3-3 2-2-2ZM15 12l4 2 0 3-3 1-3-3Z" {...F} /></Svg></DockButton>
          </DockGroup>
        </Dock>

        <Panels>
          <DockHead $pad={5}><Chevrons /></DockHead>
          <Panel $h={129}>
            <Tabs names={["颜色", "色板"]} />
            <ColorBody>
              <SwatchPair><BackSwatch /><FrontSwatch /></SwatchPair>
              <Channels>
                {([["R", "#1fe8ea", 247], ["G", "#ff10f0", 241], ["B", "#fbf01c", 241]] as const).map(([n, c, v]) => (
                  <Channel key={n}>
                    <span>{n}</span>
                    <ChannelSlider type="range" max={255} defaultValue={v} $from={c} aria-label={`${n} 滑块`} />
                    <ChannelInput defaultValue={v} aria-label={n} />
                  </Channel>
                ))}
              </Channels>
            </ColorBody>
            <Spectrum><SpectrumEnd /></Spectrum>
          </Panel>

          <Panel $h={129}>
            <Tabs names={["调整", "样式"]} />
            <AdjustBody>
              <span>添加调整</span>
              {adjustRows.map((row, r) => (
                <AdjustRow key={r}>
                  {row.map((art, i) => <AdjustButton key={i} aria-label={adjustNames[r][i]}><Svg w={18}>{art}</Svg></AdjustButton>)}
                </AdjustRow>
              ))}
            </AdjustBody>
          </Panel>

          <Panel>
            <Tabs names={["图层", "通道", "路径"]} />
            <LayerRow $h={28}>
              <SelectShell $w={71}>
                <SelectBox $pad={21} aria-label="滤镜类型"><option>类型</option></SelectBox>
                <UpDown />
                <Svg w={10}><circle cx="6" cy="4" r="3" strokeWidth="1.400" /><path d="M4 6L1 9" strokeWidth="1.600" /></Svg>
              </SelectShell>
              <FilterIcons>
                <AdjustButton aria-label="像素"><Svg w={14}><rect x="1" y="2" width="12" height="10" /><path d="M2 11l3-4 2 2 2-1 3 3ZM9 5h2v1H9Z" {...F} /></Svg></AdjustButton>
                <AdjustButton aria-label="调整"><Svg w={12}><circle cx="6" cy="6" r="5" fill="#777" /><path d="M2 9.500A5 5 0 0 1 9.500 2Z" {...F} /></Svg></AdjustButton>
                <AdjustButton aria-label="文字"><Svg w={12}><path d="M1 1h10v3h-1c0-1-.5-1.500-2-1.500H7V10l1.500 1h-5L5 10V2.500H4C2.500 2.500 2 3 2 4H1Z" {...F} /></Svg></AdjustButton>
                <AdjustButton aria-label="形状"><Svg w={12}><path d="M2.500 2.500h7v7h-7ZM.5.5h3v3h-3ZM8.500.5h3v3h-3ZM.5 8.500h3v3h-3ZM8.500 8.500h3v3h-3Z" /></Svg></AdjustButton>
                <AdjustButton aria-label="智能对象"><Svg w={12} h={14}><path d="M4.500.5h4l3 3v8h-4M4.500.5v6" strokeWidth="1.400" /><path d="M0 7h7v6H0Z" {...F} /></Svg></AdjustButton>
              </FilterIcons>
              <FilterSwitch aria-label="图层滤镜开关" />
            </LayerRow>
            <LayerRow $h={28}>
              <SelectShell $w={111}><SelectBox $pad={7} aria-label="混合模式"><option>差值</option></SelectBox><UpDown /></SelectShell>
              <Spring />
              <OptionSet $gap={5} $left={0} $right={0}><FieldLabel htmlFor="layer-opacity">不透明度:</FieldLabel><Percentage id="layer-opacity" /></OptionSet>
            </LayerRow>
            <LayerRow $h={30}>
              <OptionSet $gap={5} $left={2} $right={0}>
                <FieldLabel as="span">锁定:</FieldLabel>
                <AdjustButton aria-label="锁定透明像素"><Svg w={12}><rect x="1" y="1" width="10" height="10" /><path d="M1 1h3v3H1ZM7 1h3v3H7ZM4 4h3v3H4ZM1 7h3v4H1ZM7 7h3v4H7Z" {...F} /></Svg></AdjustButton>
                <AdjustButton aria-label="锁定图像像素"><Svg w={18} box="2 0 19 19">{brush}</Svg></AdjustButton>
                <AdjustButton aria-label="锁定位置"><Svg w={14}><path d="M7 1v12M1 7h12M5 3l2-2 2 2M5 11l2 2 2-2M3 5L1 7l2 2M11 5l2 2-2 2" strokeWidth="1.200" /></Svg></AdjustButton>
                <AdjustButton aria-label="锁定全部"><Lock solid /></AdjustButton>
              </OptionSet>
              <Spring />
              <OptionSet $gap={5} $left={0} $right={0}><FieldLabel htmlFor="fill">填充:</FieldLabel><Percentage id="fill" /></OptionSet>
            </LayerRow>
            <LayerList>
              <Layer $on>
                <EyeCell aria-label="背景 副本 可见性"><Eye /></EyeCell>
                <ThumbFrame>
                  <Thumb $fill="linear-gradient(135deg, #3ddc14, #8a7a84 55%, #cc22e0)" />
                  <Svg w={36}><path d="M.5 11V.5H11M25 .5h10.500V11M35.500 25v10.500H25M11 35.500H.5V25" stroke="#fff" /></Svg>
                </ThumbFrame>
                背景 副本
              </Layer>
              <Layer>
                <EyeCell aria-label="背景 可见性"><Eye /></EyeCell>
                <ThumbFrame><Thumb $fill="#fff" /></ThumbFrame>
                背景
                <LockSlot><Lock /></LockSlot>
              </Layer>
            </LayerList>
            <LayerFooter>
              <AdjustButton aria-label="链接图层"><Svg w={16} h={10}><rect x="1" y="2" width="8" height="5" rx="2.500" /><rect x="7" y="2" width="8" height="5" rx="2.500" /></Svg></AdjustButton>
              <AdjustButton aria-label="图层样式"><Svg w={14}><path d="M3 13c3 0 2-11 6-11M3 6h5M8 7l5 5M13 7l-5 5" strokeWidth="1.400" /></Svg></AdjustButton>
              <AdjustButton aria-label="图层蒙版"><Svg w={14} h={12}><rect x="0" y="1" width="14" height="10" {...F} /><circle cx="7" cy="6" r="3" fill="#444" stroke="none" /></Svg></AdjustButton>
              <AdjustButton aria-label="调整图层"><Svg w={12}><circle cx="6" cy="6" r="5" fill="#777" /><path d="M2 9.500A5 5 0 0 1 9.500 2Z" {...F} /></Svg></AdjustButton>
              <AdjustButton aria-label="新建组"><Svg w={14} h={12}><path d="M0 1h5l1 2h7v8H0Z" {...F} /></Svg></AdjustButton>
              <AdjustButton aria-label="新建图层"><Svg w={12}><path d="M1 1h10v10H5L1 7Z" {...F} /></Svg></AdjustButton>
              <AdjustButton aria-label="删除图层"><Svg w={12} h={14}><path d="M2 4h8l-1 9H3ZM0 3.500h12M4 1.500h4M5 6v5M7 6v5" /></Svg></AdjustButton>
            </LayerFooter>
          </Panel>
        </Panels>
      </Work>

      <Palette>
        <PaletteHead><Chevrons /><Cross /></PaletteHead>
        <PaletteGrip><Dots /></PaletteGrip>
        {tools.map((t) => (
          <React.Fragment key={t.name}>
            <ToolButton aria-label={t.name} $on={t.on} $more={t.more}><Svg w={20}>{t.art}</Svg></ToolButton>
            {t.rule && <ToolRule $h={t.rule} />}
          </React.Fragment>
        ))}
        <SwapRow>
          <Svg w={10}><path d="M0 1h6v5H0Z" fill="#222" stroke="#bbb" /><path d="M3 5h6v4H3Z" fill="#ccc" stroke="none" /></Svg>
          <Svg w={12}><path d="M2 4c4 0 7 0 7 6M4 1L1 4l3 3M6.500 8L9 11l2.500-3" stroke="#bbb" /></Svg>
        </SwapRow>
        <ToolSwatches><SwatchPair><BackSwatch /><FrontSwatch /></SwatchPair></ToolSwatches>
        <ToolButton aria-label="快速蒙版"><Svg w={20}><rect x="2" y="4" width="15" height="12" fill="#333" /><circle cx="9.500" cy="10" r="3.500" strokeDasharray="1 1" /></Svg></ToolButton>
        <ToolButton aria-label="屏幕模式" $more><Svg w={20}><rect x="1.500" y="8.500" width="10" height="8" fill="#555" strokeWidth="1.400" /><rect x="6.500" y="4.500" width="11" height="8" fill="#777" strokeWidth="1.400" /></Svg></ToolButton>
      </Palette>

      <Dialog role="dialog" aria-label="波浪">
        <DialogTitle>
          波浪
          <DialogClose aria-label="关闭"><Svg w={14} h={12}><path d="M3 2l8 8M11 2l-8 8" stroke="#6b3a36" strokeWidth="4.400" /><path d="M3 2l8 8M11 2l-8 8" stroke="#fff" strokeWidth="2.600" /></Svg></DialogClose>
        </DialogTitle>
        <DialogBody>
          <LeftSide>
            <FirstGroup>
              <WaveHead>
                <label htmlFor="gen">生成器数(G):</label>
                <ActiveInput><input id="gen" defaultValue="411" /></ActiveInput>
              </WaveHead>
              <Slider type="range" max={999} defaultValue={411} $h={16} aria-label="生成器数" />
            </FirstGroup>
            <Wave name="波长(W):" heads={["最小", "最大"]} values={[120, 121]} max={1050} />
            <Wave name="波幅(A):" heads={["最小", "最大"]} values={[33, 34]} max={1050} />
            <Wave name="比例(S):" heads={["水平", "垂直"]} values={[100, 100]} max={100} tight />
          </LeftSide>
          <RightSide>
            <TopRight>
              <Choices $w={92}>
                <Caption>类型:</Caption>
                <Choice><RadioDot type="radio" name="type" />正弦(I)</Choice>
                <Choice><RadioDot type="radio" name="type" />三角形  (T)</Choice>
                <Choice><RadioDot type="radio" name="type" defaultChecked />方形(Q)</Choice>
              </Choices>
              <Actions>
                <DialogButton type="button" $default>确定</DialogButton>
                <DialogButton type="button">取消</DialogButton>
              </Actions>
            </TopRight>
            <Preview>
              <svg width="134" height="134" shapeRendering="crispEdges" role="img" aria-label="预览">
                {cells.map(({ c, r }) => <rect key={`${c}-${r}`} x={c * 20} y={r * 20} width="20" height="20" fill={cellColor(c, r)} />)}
              </svg>
            </Preview>
            <RandomRow><DialogButton type="button" $w={60}>随机化</DialogButton></RandomRow>
            <Choices>
              <Caption>未定义区域:</Caption>
              <Choice><RadioDot type="radio" name="edge" />折回(R)</Choice>
              <Choice><RadioDot type="radio" name="edge" defaultChecked />重复边缘像素(E)</Choice>
            </Choices>
          </RightSide>
        </DialogBody>
        <Marks width="519" height="395" aria-hidden="true">
          <rect x="167.500" y="64.500" width="120" height="242" fill="none" stroke="#d83030" />
          <rect x="302.500" y="93.500" width="48" height="23" fill="none" stroke="#d83030" />
          <rect x="297.500" y="357.500" width="125" height="24" fill="none" stroke="#d83030" />
          <g fill="#f01010">
            <path d="M127 324l18-7-3-5 16 3-11 9-1-3Z" />
            <path d="M286 134c2-6 4-9 5-10l-2-2 9-5-2 12-3-2c-2 1-5 4-7 7Z" />
            <path d="M275 358l8 15 4-3-2 16-9-10 4-2Z" />
          </g>
        </Marks>
      </Dialog>

      <TaskBar>
        <StartButton aria-label="开始">
          <Svg w={38}>
            <circle cx="19" cy="20" r="18" fill="#2e5876" stroke="#c8dcec" />
            <path d="M3 16a17 17 0 0 1 32 0c-10 5-22 5-32 0Z" fill="#7fa3bd" stroke="none" />
            <path d="M12 10c3-2 5-1 7 0l-1 8c-3-2-5-2-8-1Z" fill="#e8562a" stroke="none" />
            <path d="M20 11c3 1 5 1 8 0l-2 8c-2 1-5 1-7 0Z" fill="#8cc63f" stroke="none" />
            <path d="M10 19c3-1 5-1 8 1l-2 7c-3-1-5-1-7 0Z" fill="#3d9be0" stroke="none" />
            <path d="M19 21c2 1 5 1 7 0l-2 7c-2 1-5 1-7 0Z" fill="#fbc524" stroke="none" />
          </Svg>
        </StartButton>
        <TaskItem $w={62} aria-label="安全管家">
          <Svg w={32} h={34}>
            <path d="M8 0c-9 2-9 14-1 16 6 2 10-2 9-6-5 2-9-3-8-10Z" fill="#7cc520" stroke="none" />
            <circle cx="22" cy="9" r="8.500" fill="#3f97e6" stroke="none" />
            <circle cx="22" cy="23" r="8.500" fill="#e04a3c" stroke="none" />
            <circle cx="9" cy="25" r="8.500" fill="#f2bd22" stroke="none" />
          </Svg>
        </TaskItem>
        <TaskItem $w={68} aria-label="Internet Explorer"><IeIcon /></TaskItem>
        <TaskItem $w={54} aria-label="文件夹">
          <Svg w={34}>
            <path d="M2 6l2-3h10l2 3h15v28H2Z" fill="#f2dc88" stroke="#caa94c" />
            <path d="M5 9h24v16H5Z" fill="#fbf0b8" stroke="none" />
            <path d="M5 3h4v3H5ZM19 4h4v3h-4Z" fill="#4c9a3c" stroke="none" />
            <path d="M12 4h3v3h-3Z" fill="#c8502c" stroke="none" />
            <path d="M7 19h21v12H7Z" fill="#9edcf0" stroke="#fff" />
          </Svg>
        </TaskItem>
        <TaskItem $w={64} aria-label="媒体播放器">
          <Svg w={30} h={34}>
            <path d="M5 5h22v28H5Z" fill="#6ab0dc" stroke="#3d84b4" />
            <path d="M2 6h20v28H2Z" fill="#a8d4ee" stroke="#4d94c4" />
            <circle cx="12" cy="17" r="9" fill="#ee7c1c" stroke="#fff" />
            <path d="M9 12v11l8-5.500Z" fill="#fff" stroke="none" />
          </Svg>
        </TaskItem>
        <TaskItem $w={58} $open aria-label="Internet Explorer 窗口"><IeIcon /></TaskItem>
        <TaskItem $w={59} $open aria-label="Word">
          <Svg w={32} h={34}>
            <path d="M3 2h20l6 6v26H3Z" fill="#f5f8fc" stroke="#3d66a4" />
            <path d="M22 20l8 2-2 8-8-2Z" fill="#fff" stroke="#88a4cc" />
            <path d="M4 6h4l2 10 3-10h4l2 10 2-10h4l-4 17h-5l-2-9-3 9H8Z" fill="#1e56a6" stroke="none" />
          </Svg>
        </TaskItem>
        <TaskItem $w={58} $open aria-label="Photoshop">
          <Svg w={30} h={34}>
            <rect x="1" y="2" width="28" height="27" fill="#1c1a5e" stroke="#4f6db4" />
            <text x="5" y="20" fontFamily="Liberation Sans, sans-serif" fontWeight="700" fontSize="15" fill="#8fc0f4" stroke="none">Ps</text>
          </Svg>
        </TaskItem>
        <Tray>
          <Svg w={14} h={16}><rect x="0.500" y="4.500" width="13" height="7" fill="#cfdae6" stroke="#56697c" /><path d="M2 7h10M2 9h10" stroke="#56697c" strokeDasharray="1 1" /></Svg>
          <Svg w={9} h={16}><path d="M3 .5h5v3H3ZM.5 2.500h5v3h-5Z" stroke="#fff" /><path d="M1 12h6l-3 3Z" fill="#fff" stroke="none" /></Svg>
          <Svg w={16}><circle cx="8" cy="9" r="7.500" fill="#f2dc10" stroke="#4aa028" /><path d="M4 9h8M8 5v8" stroke="#226a18" strokeWidth="2.400" /></Svg>
          <Svg w={16}><path d="M2 1h5v4H2Z" fill="#ddd" stroke="#555" /><path d="M1 5h8v8H1Z" fill="#666" stroke="none" /><circle cx="11" cy="11" r="5" fill="#2faf3e" stroke="none" /><path d="M8.500 11l2 2 3-4" stroke="#fff" strokeWidth="1.600" /></Svg>
          <Svg w={15} h={18}><ellipse cx="7" cy="6" rx="5.500" ry="5.500" fill="#151515" stroke="none" /><ellipse cx="7" cy="14" rx="6" ry="5" fill="#fff" stroke="#151515" /><path d="M2 9.500h10v3H2Z" fill="#e63a90" stroke="none" /><circle cx="5" cy="5" r="1.500" fill="#fff" stroke="none" /><circle cx="9" cy="5" r="1.500" fill="#fff" stroke="none" /><path d="M5 8h4" stroke="#f0a818" strokeWidth="2" /></Svg>
          <Svg w={15} h={16}><path d="M1 3l5 2 3-3 5 3v9H2Z" fill="#f2a034" stroke="none" /><path d="M6 7v6M10 7l-3 3 3 3" stroke="#fff" strokeWidth="1.400" /></Svg>
          <Svg w={14} h={16}><path d="M2 1.500h6v14H2ZM7 5.500h6v5H7ZM10 2v4M10 10v4" stroke="#fff" fill="#5c6670" strokeWidth="1.400" /></Svg>
          <Svg w={13} h={16}><path d="M1 6h3l4-4v13l-4-4H1Z" fill="#fff" stroke="#667" /><path d="M10 5c2 2 2 5 0 7" stroke="#fff" strokeWidth="1.400" /></Svg>
          <Svg w={15} h={16}><rect x="4" y="4" width="10" height="7" fill="#5a6c7e" stroke="#fff" strokeWidth="1.400" /><path d="M2 1v12M6 14h7" stroke="#fff" strokeWidth="1.600" /></Svg>
          <Svg w={15} h={16}><path d="M2 1v15M2 2h8v6H2" stroke="#fff" fill="#e8e8e8" strokeWidth="1.400" /><circle cx="10" cy="11" r="4.500" fill="#d83020" stroke="none" /><path d="M8 9l4 4M12 9l-4 4" stroke="#fff" strokeWidth="1.400" /></Svg>
        </Tray>
        <Clock>17:04<br />2015/6/27</Clock>
        <ShowDesktop aria-label="显示桌面" />
      </TaskBar>

      <Bubble>56</Bubble>
      <Watermark>
        <Svg w={50} h={54}>
          <ellipse cx="22" cy="20" rx="20" ry="9" transform="rotate(-38 22 20)" stroke="#3a6a90" opacity=".7" />
          <path d="M4 3l30 28 14 14-24-4-19 10 7-15Z" fill="#b8404a" opacity=".75" stroke="none" />
        </Svg>
        <div>
          <MarkName>计算机协会</MarkName>
          <MarkSite>www.gxjmca.com</MarkSite>
        </div>
      </Watermark>
    </Screen>
  );
}
